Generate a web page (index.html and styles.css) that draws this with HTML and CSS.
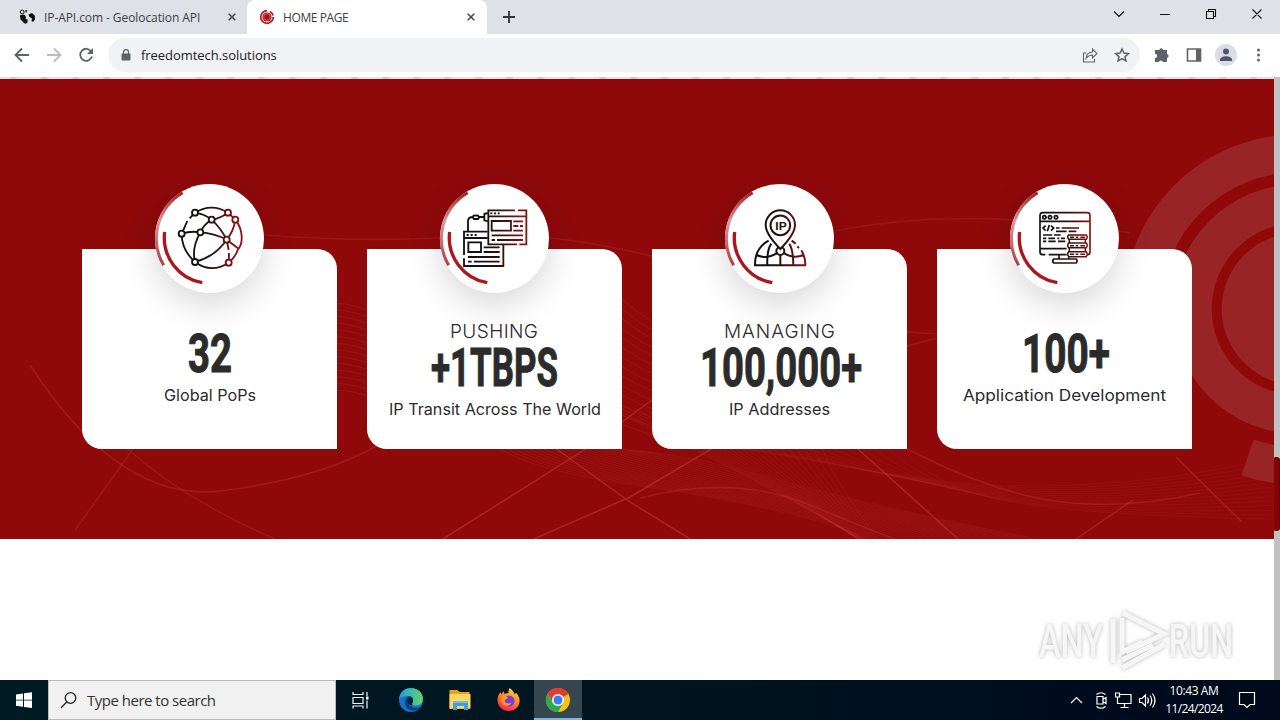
FILE: index.html
```html
<!DOCTYPE html>
<html lang="en">
<head>
<meta charset="utf-8">
<title>HOME PAGE</title>
<link rel="stylesheet" href="styles.css">
</head>
<body>
<div class="screen">
  <header class="tabs">
    <div class="tab tab-idle">
      <svg class="fav" viewBox="0 0 16 16"><circle cx="3.200" cy="3" r="1.900" fill="none" stroke="#111" stroke-width="1"/><path d="M.8 6.500L3.500 5.500 6 6l1 2.500-.5 1.500 2.300.5-.5 3.500-2.500.8L4 13 1.500 10.500zM6 1.500l2.500-.5-1.500 3zM9.500 5.500L13 4l2.800 2.500.2 4-2 2.500-1.500-1 .5-2.500-2.500-1.500z" fill="#111"/></svg>
      <span class="tab-title title-a">IP-API.com - Geolocation API</span>
      <svg class="close" viewBox="0 0 8 8"><path d="M.7.7l6.600 6.600M7.300.7L.7 7.300"/></svg>
    </div>
    <div class="tab tab-active">
      <svg class="fav" viewBox="0 0 16 16"><circle cx="8" cy="8" r="6.300" fill="none" stroke="#b3171b" stroke-width="1.700" stroke-dasharray="29 3 5 3"/><circle cx="8" cy="8" r="4.600" fill="#a80e12"/><circle cx="8" cy="8" r="3.300" fill="none" stroke="#e88" stroke-width=".7"/></svg>
      <span class="tab-title title-b">HOME PAGE</span>
      <svg class="close" viewBox="0 0 8 8"><path d="M.7.7l6.600 6.600M7.300.7L.7 7.300"/></svg>
    </div>
    <svg class="plus" viewBox="0 0 12 12"><path d="M6 0v12M0 6h12"/></svg>
    <svg class="winctl" viewBox="0 0 170 34"><path d="M4 11.500l5 5 5-5M50 14.500h10M96.500 11.500h7v7h-7zM98.500 11.500v-2h7v7h-2M142.500 9.500l9 9M151.500 9.500l-9 9"/></svg>
  </header>

  <div class="toolbar">
    <svg class="nav" viewBox="0 0 108 42"><g fill="none" stroke="#5f6368" stroke-width="1.800"><path d="M29 21H16M22 14.500L15.500 21l6.500 6.500"/><path d="M47 21h13M54 14.500l6.500 6.500-6.500 6.500" stroke="#babcbe"/><path d="M91.300 17.500a6 6 0 1 0 .7 5"/></g><path d="M93 14v6h-6z" fill="#5f6368"/></svg>
    <div class="omnibox">
      <svg class="lock" viewBox="0 0 10 12"><rect x=".5" y="4.500" width="9" height="7" rx="1" fill="#5f6368"/><path d="M2.500 5V3.200a2.500 2.500 0 0 1 5 0V5" fill="none" stroke="#5f6368" stroke-width="1.300"/></svg>
      <span class="url">freedomtech.solutions</span>
      <svg class="omni-actions" viewBox="0 0 48 18"><path d="M4.500 7H1.500v9h11v-3M4 12.500c.5-4 3-6.500 6.500-6.500V3l4.500 4.500-4.500 4.500V9C8 9 6 10 4 12.500z" fill="none" stroke="#5f6368" stroke-width="1.100"/><path d="M40 3l1.900 4.100 4.500.5-3.400 3 1 4.400-4-2.300-4 2.300 1-4.400-3.400-3 4.500-.5z" fill="none" stroke="#5f6368" stroke-width="1.500"/></svg>
    </div>
    <svg class="extras" viewBox="0 0 140 42"><path d="M16 16h3.200a2.100 2.100 0 0 1 4.100 0h3.700v4a2.100 2.100 0 0 1 0 4.100V28h-4a2.200 2.200 0 0 0-4.200 0H15v-4a2.100 2.100 0 0 0 0-4.200V16z" fill="#5f6368"/><path d="M47.500 15h13v12h-13z" fill="#fff" stroke="#5f6368" stroke-width="1.600"/><path d="M56 15h5v12h-5z" fill="#5f6368"/><circle cx="86" cy="21" r="11" fill="#dadce6"/><circle cx="86" cy="17.500" r="3" fill="#51566c"/><path d="M80 27v-1.500c0-2 3-3.300 6-3.300s6 1.300 6 3.300V27z" fill="#51566c"/><g fill="#5f6368"><circle cx="118.500" cy="16" r="1.500"/><circle cx="118.500" cy="21" r="1.500"/><circle cx="118.500" cy="26" r="1.500"/></g></svg>
  </div>

  <div class="viewport">
    <main class="page">
      <div class="peek"></div>
      <section class="stats">
        <svg class="backdrop" viewBox="0 79 1274 460" aria-hidden="true">
          <g id="mesh" fill="none" stroke="#d8484a" stroke-width=".8"></g>
          <g fill="none" stroke="#c93b3e" stroke-width="1.500">
            <path d="M443 539L581 452 720 350M534 539L630 497 711 449 830 365M540 437L630 502 690 539M800 380L858 449 958 539" opacity=".5"/>
            <path d="M1076 539L1133 500M1176 457L1242 522" opacity=".4"/>
            <path d="M75 530L133 449M128 449Q185 500 275 539" opacity=".28"/>
            <path d="M30 365Q120 503 220 491T380 444M640 498Q735 474 810 505T895 539M900 445C1000 498 1080 520 1200 493" opacity=".33"/>
            <path d="M835 231Q965 205 1130 233M264 235Q355 242 440 238M549 238Q610 243 725 275M907 332L937 334M907 346L937 338" opacity=".25"/>
          </g>
          <g fill="#982426">
            <circle cx="1297.700" cy="309" r="76"/>
            <g fill="none" stroke="#982426">
              <circle cx="1297.700" cy="309" r="105.300" stroke-width="38.700"/>
              <path d="M1142 309A155.700 155.700 0 0 1 1297.700 153.300M1247.500 457.400A156.700 156.700 0 0 0 1297.700 465.700" stroke-width="38"/>
            </g>
          </g>
        </svg>

        <div class="cards">
          <article class="card">
            <div class="disc"></div>
            <svg class="badge" viewBox="0 0 420 420">
              <defs>
                <linearGradient id="ink" gradientUnits="userSpaceOnUse" x1="165" y1="0" x2="290" y2="0"><stop offset="0" stop-color="#111"/><stop offset=".45" stop-color="#2c1010"/><stop offset="1" stop-color="#8b1114"/></linearGradient>
                <linearGradient id="rim" x1="0" y1="0" x2="0" y2="1"><stop offset="0" stop-color="#a02225"/><stop offset=".4" stop-color="#d99a9c"/><stop offset="1" stop-color="#b23b40"/></linearGradient>
                <g id="arcs" fill="none"><path d="M128 68A160 160 0 0 0 71 286" stroke="url(#rim)" stroke-width="9"/><path d="M74 186A137 137 0 0 0 187 338" stroke="#a8191e" stroke-width="10"/></g>
              </defs>
              <use href="#arcs"/>
              <g fill="none" stroke="url(#ink)" stroke-width="5.500">
                <path d="M165 128Q215 98 264 128M165 128Q193 132 215 149Q240 145 264 128M286 149C310 180 310 220 294 238Q286 262 266 278Q214 312 165 276Q125 240 125 191L142 153M149 145L165 128M125 191Q153 182 181 187Q190 164 215 149Q242 174 260 209Q282 182 286 149M181 187Q222 189 260 209L294 235M181 187Q154 235 165 276Q225 260 260 209L266 240M267 249L266 278M264 128L286 149"/>
                <g fill="#fff"><circle cx="165" cy="128" r="9"/><circle cx="264" cy="128" r="9"/><circle cx="286" cy="149" r="9"/><circle cx="215" cy="149" r="9"/><circle cx="125" cy="191" r="9"/><circle cx="181" cy="187" r="9"/><circle cx="260" cy="209" r="9"/><circle cx="165" cy="276" r="9"/><circle cx="266" cy="278" r="9"/></g>
              </g>
            </svg>
            <svg class="figure" viewBox="0 0 255 45"><text x="106" y="42" textLength="44" lengthAdjust="spacingAndGlyphs">32</text></svg>
            <svg class="caption" viewBox="0 0 255 24"><text x="82" y="16" textLength="92" lengthAdjust="spacingAndGlyphs">Global PoPs</text></svg>
          </article>

          <article class="card card-tall">
            <div class="disc"></div>
            <svg class="badge" viewBox="0 0 420 420">
              <use href="#arcs"/>
              <g fill="none" stroke="url(#ink)" stroke-width="5.500">
                <path d="M270 121H190V223H276M283 223H304V121H279M190 139H304M196 130h6M207 130h6M218 130h6M200 153H258V182H200zM265 154H294M265 168h15M285 168h9M265 182H294M200 196H294M200 210h10M216 210H294"/>
                <path d="M188 185H117V255M117 265V288H235V225M117 204H188M125 195h6M137 195h6M149 195h6M130 217H168V246H130zM176 232H224M176 246H224M129 261H224M129 275h11M147 275H224M129 182V154Q129 141 144 141M163 141H178M146 137L143 141 147 147H159L163 141 158 136zM188 129L178 132V151L189 154"/>
              </g>
            </svg>
            <svg class="kicker" viewBox="0 0 255 22"><text x="83" y="16" textLength="88">PUSHING</text></svg>
            <svg class="figure" viewBox="0 0 255 45"><text x="64" y="42" textLength="127" lengthAdjust="spacingAndGlyphs">+1TBPS</text></svg>
            <svg class="caption" viewBox="0 0 255 24"><text x="22" y="16" textLength="212" lengthAdjust="spacingAndGlyphs">IP Transit Across The World</text></svg>
          </article>

          <article class="card card-tall">
            <div class="disc"></div>
            <svg class="badge" viewBox="0 0 420 420">
              <use href="#arcs"/>
              <g fill="none" stroke="url(#ink)" stroke-width="6">
                <path d="M132 286H288M135 286Q134 234 176 212M245 212L257 221M274 241Q287 263 286 286M172 286Q170 241 184 221M250 286Q250 241 238 221M211 255V286M140 255Q170 270 203 248M220 248Q249 268 280 255M262 229l5 5"/>
                <circle cx="211" cy="243" r="12"/>
                <path d="M211 237Q167 192 167 165A44 44 0 0 1 255 165Q255 192 211 237z" fill="#fff"/>
                <circle cx="211" cy="166" r="29.500"/>
              </g>
              <text class="pin-label" x="196" y="179" textLength="34" lengthAdjust="spacingAndGlyphs">IP</text>
            </svg>
            <svg class="kicker" viewBox="0 0 255 22"><text x="72" y="16" textLength="111">MANAGING</text></svg>
            <svg class="figure" viewBox="0 0 255 45"><text x="48" y="42" textLength="162" lengthAdjust="spacingAndGlyphs">100,000+</text></svg>
            <svg class="caption" viewBox="0 0 255 24"><text x="77" y="16" textLength="101" lengthAdjust="spacingAndGlyphs">IP Addresses</text></svg>
          </article>

          <article class="card">
            <div class="disc"></div>
            <svg class="badge" viewBox="0 0 420 420">
              <use href="#arcs"/>
              <g fill="none" stroke="url(#ink)" stroke-width="5">
                <path d="M151 254H143Q135 254 135 246V137Q135 128 143 128H277Q285 128 285 137V246Q285 254 277 254M161 254H215M135 154H285M135 236H215"/>
                <circle cx="148" cy="142" r="5"/><circle cx="165" cy="142" r="5"/><circle cx="183" cy="142" r="5"/>
                <path d="M152 167L144 174 152 182M168 167L176 174 168 182M163 165L157 184M183 174h11M200 174H252M183 184H215M221 184H244M144 195H172M177 195H197M144 205H154M160 205H180M187 205h6M198 205h12M144 214H154M160 214H182M189 214H211"/>
                <path d="M192 255V267M221 262V267M176 267H244Q249 273 244 279H176Q170 273 176 267z"/>
                <path d="M221 195H248M257 195H274Q279 201 274 208H221Q215 201 221 195zM221 219H274Q279 226 274 233H221Q215 226 221 219zM221 245H274Q279 252 274 260H221Q215 252 221 245zM223 208V219M271 208V219M223 233V245M271 233V245M225 202h12M242 202h8M256 202h14M225 227h12M242 227h8M256 227h14M225 253h12M242 253h8M256 253h14" stroke-width="4.500"/>
              </g>
            </svg>
            <svg class="figure" viewBox="0 0 255 45"><text x="85" y="42" textLength="88" lengthAdjust="spacingAndGlyphs">100+</text></svg>
            <svg class="caption" viewBox="0 0 255 24"><text x="26" y="16" textLength="203" lengthAdjust="spacingAndGlyphs">Application Development</text></svg>
          </article>
        </div>
      </section>
      <section class="blank">
        <svg class="watermark" viewBox="0 0 208 72">
          <g class="wm-text"><text x="8" y="51" textLength="64" lengthAdjust="spacingAndGlyphs">ANY</text><text x="138" y="51" textLength="64" lengthAdjust="spacingAndGlyphs">RUN</text></g>
          <g class="wm-mark"><path d="M92 7L133 28 95 46M91 12V46L112 36M82 13V57M91 62L134 38M91 54L122 39"/></g>
        </svg>
      </section>
    </main>
    <div class="scrollbar"><div class="thumb"></div></div>
  </div>

  <footer class="taskbar">
    <svg class="start" viewBox="0 0 48 40"><path d="M16 14.500l7-1v6.200h-7zM24 13.300l8-1.100v7.500h-8zM16 20.500h7v6.300l-7-1zM24 20.500h8V28l-8-1.100z" fill="#fff"/></svg>
    <div class="search">
      <svg class="glass" viewBox="0 0 18 18"><circle cx="10.500" cy="7" r="5.300"/><path d="M6.800 11L1 16.800"/></svg>
      <span>Type here to search</span>
    </div>
    <div class="task"><svg viewBox="0 0 48 40"><path d="M17 12v2.500h10V12M17 17.500h10v6H17zM17 28.500V26h10v2.500M31 12v4M31 20.500v8" fill="none" stroke="#eef3f5" stroke-width="1.200"/><path d="M30 16.500h2.500v3H30z" fill="#fff"/></svg></div>
    <div class="task"><svg viewBox="0 0 48 40">
      <defs><linearGradient id="ea" x1="0" y1="0" x2="1" y2="0"><stop offset="0" stop-color="#259fdc"/><stop offset="1" stop-color="#5fd46c"/></linearGradient></defs>
      <circle cx="27" cy="20" r="12" fill="#1372c4"/><path d="M15 19C16 11 22 8 27 8c7 0 12 5 12 11 0 4-3 6.500-7 6.500-3 0-4.500-1.200-3.500-3 2-4-1-6.500-4.500-6.500-4 0-8 1-9 3z" fill="url(#ea)"/><path d="M23.500 17c-4 3-4 10 2.500 13 4 1.500 8 0 10.500-3-6 2.500-12 0-12-5 0-2 .8-3.500 2-4.500z" fill="#0b3f82"/><path d="M28.500 22.500c1.500-3 0-6-3-6.300-2 .8-2.500 3-2.300 5 .3 2.300 2 4 4.800 4.300z" fill="#06253b"/></svg></div>
    <div class="task task-gap"><svg viewBox="0 0 48 40"><path d="M16.500 10h8l2 2h10v17h-20z" fill="#e9a01b"/><path d="M16.500 14h21v14.500h-21z" fill="#ffd75e"/><path d="M20 21h15v9h-4v-4h-7v4h-4z" fill="#3f9fdf"/><path d="M20 21h15v2H20z" fill="#71bce9"/></svg></div>
    <div class="task task-gap"><svg viewBox="0 0 48 40">
      <defs><linearGradient id="ff" x1=".8" y1="0" x2=".3" y2="1"><stop offset="0" stop-color="#ffe13b"/><stop offset=".45" stop-color="#ff8b22"/><stop offset="1" stop-color="#f6234f"/></linearGradient></defs>
      <path d="M27.500 8c3 2 4.500 4 4.800 6l2-1c2.500 3 3.700 5.500 3.200 9-.8 5.500-5 9-11 9-6.500 0-11-5-11-11 0-3 1-6 3-8l1 2.500 2-3.500 1 3c1.500-.8 3-.8 4-.8 0-2 0-3.500 1-5.200z" fill="url(#ff)"/><circle cx="27" cy="21" r="5.500" fill="#7b3bd6"/><path d="M19 16c3-1 5 0 7 1.500-1 2-3 1.500-3.500 3 .5 3 4 4 7 2-1 4-8 4.500-10 0z" fill="#ff9a25"/></svg></div>
    <div class="task task-active"><svg viewBox="0 0 48 40"><circle cx="24" cy="20" r="12" fill="#fbc116"/><path d="M24 20L13.600 14a12 12 0 0 1 20.800 0z" fill="#e33b2e"/><path d="M24 14h10.400a12 12 0 0 0-20.800 0L19 23z" fill="#e33b2e"/><path d="M13.600 14a12 12 0 0 0 10.400 18l5.200-9H18.800z" fill="#2da94f"/><circle cx="24" cy="20" r="6" fill="#fff"/><circle cx="24" cy="20" r="4.500" fill="#3b7ded"/></svg></div>
    <div class="tray">
      <svg class="tray-icons" viewBox="0 0 96 40"><g fill="none" stroke="#fff" stroke-width="1.200"><path d="M5 23l5.500-5.500L16 23M31 16.500h6v7.500h-6zM37.500 19l2.500-1.500v6L37.500 22M30.500 14.500q4.500-3.500 9 0M30.500 26.500q4.500 3.500 9 0M53 14.500h12v9H51.500V19M58.500 24v3.500M54.500 27.500h8M49.500 13h4v4h-4zM51.500 17v3"/><path d="M73.500 18.500H76l3.500-3.500v11L76 22.500h-2.500zM81.500 17.500q2 3 0 6M84 15.500q3.500 5 0 10M86.500 13.500q5 7 0 14"/></g></svg>
      <div class="clock"><span class="time">10:43 AM</span><span class="date">11/24/2024</span></div>
      <svg class="notes" viewBox="0 0 18 18"><path d="M1.500 1.500h15v12H12l-3 3-3-3H1.500z" fill="none" stroke="#fff" stroke-width="1.200"/></svg>
    </div>
  </footer>
</div>
<script src="mesh.js"></script>
</body>
</html>
```

FILE: styles.css
```css
* { box-sizing: border-box; }
body { margin: 0; font-family: "Open Sans", "Noto Sans", sans-serif; }
svg { display: block; flex: none; }
.screen { width: 1280px; height: 720px; display: flex; flex-direction: column; overflow: hidden; background: #fff; }

.tabs { height: 34px; flex: none; display: flex; align-items: center; background: #dee1e8; }
.tab { height: 34px; display: flex; align-items: center; font-size: 12px; color: #3c4043; white-space: nowrap; }
.tab-idle { width: 247px; padding: 0 11px 0 19px; }
.tab-active { width: 240px; padding: 0 12px; background: #fff; border-radius: 8px 8px 0 0; }
.fav { width: 16px; height: 16px; }
.tab-title { flex: 1; margin-left: 8px; }
.title-a { margin-left: 9px; letter-spacing: -0.08px; }
.title-b { letter-spacing: -0.4px; }
.close { width: 8px; height: 8px; fill: none; stroke: #45494d; stroke-width: 1.6; }
.plus { width: 12px; height: 12px; margin-left: 16px; fill: none; stroke: #30343a; stroke-width: 1.8; }
.winctl { width: 170px; height: 34px; margin-left: auto; fill: none; stroke: #111; stroke-width: 1.1; }

.toolbar { height: 43px; flex: none; display: flex; align-items: flex-start; background: #fff; }
.nav { width: 108px; height: 42px; }
.omnibox { width: 1032px; height: 34px; margin-top: 4px; padding: 0 9px 0 13px; display: flex; align-items: center; border-radius: 17px; background: #f0f2f5; }
.lock { width: 10px; height: 12px; }
.url { flex: 1; margin-left: 10px; font-size: 13px; line-height: 18px; letter-spacing: -0.05px; color: #202124; }
.omni-actions { width: 48px; height: 18px; margin-right: 1px; }
.extras { width: 140px; height: 42px; }

.viewport { height: 603px; flex: none; display: flex; }
.page { width: 1274px; }
.peek { height: 2px; background: repeating-linear-gradient(90deg, #f3dfe0 0 9px, #e2c0c2 12px 15px, #f3dfe0 19px 31px); }
.stats { position: relative; height: 460px; padding: 170px 0 0 82px; background: #8f090b; }
.backdrop { position: absolute; inset: 0; width: 1274px; height: 460px; }
.cards { position: relative; display: flex; gap: 30px; }
.card { position: relative; width: 255px; height: 200px; padding-top: 81px; background: #fff; border-radius: 0 20px 0 20px; }
.card-tall { padding-top: 73px; }
.disc { position: absolute; left: 73px; top: -65px; width: 109px; height: 109px; border-radius: 50%; background: #fff; box-shadow: 0 11px 34px rgba(0, 0, 0, 0.16); }
.badge { position: absolute; left: 58px; top: -79px; width: 140px; height: 140px; }
.pin-label { font: 700 34px "Liberation Sans", sans-serif; fill: #241010; }
.kicker, .figure, .caption { width: 255px; overflow: visible; fill: #2b2b2b; }
.kicker { height: 22px; font: 300 19px Inter, sans-serif; }
.figure { height: 45px; font: 700 54px Roboto, sans-serif; stroke: #2b2b2b; stroke-width: 1; }
.caption { height: 24px; margin-top: 10px; font: 400 16px Inter, sans-serif; }
.blank { height: 141px; padding: 67px 35px 0 0; display: flex; justify-content: flex-end; background: #fff; }
.watermark { width: 208px; height: 72px; overflow: visible; filter: drop-shadow(0 0 2px rgba(0, 0, 0, 0.28)); }
.wm-text { font: 500 47px Roboto, sans-serif; fill: #f6f6f6; }
.wm-mark { fill: none; stroke: #f6f6f6; stroke-width: 5; }
.scrollbar { width: 6px; padding-top: 380px; background: #c1c1c1; }
.thumb { width: 7px; height: 74px; margin-left: -1px; border: 1px solid #590000; border-radius: 3px; background: #850306; }

.taskbar { height: 40px; flex: none; display: flex; background: linear-gradient(90deg, #001a24, #00151f 50%, #000a1d 90%); }
.start { width: 48px; height: 40px; }
.search { width: 288px; height: 40px; padding-left: 11px; display: flex; align-items: center; background: #f1f1f1; border: 1px solid #b9bcbe; font-size: 15px; letter-spacing: -0.5px; color: #333; }
.glass { width: 18px; height: 18px; margin-right: 9px; fill: none; stroke: #222; stroke-width: 1.3; }
.task { width: 48px; height: 40px; }
.task-gap { margin-left: 1px; }
.task svg { width: 48px; height: 40px; }
.task-active { margin-left: 4px; background: #36464e; box-shadow: inset 0 -2px #76b9ed; }
.tray { margin-left: auto; display: flex; align-items: center; padding-right: 24px; color: #fff; }
.tray-icons { width: 96px; height: 40px; margin-right: 1px; }
.clock { width: 60px; margin: 0 14px 0 1px; display: flex; flex-direction: column; align-items: center; font-size: 12px; line-height: 18px; white-space: nowrap; }
.time { letter-spacing: -0.4px; }
.date { letter-spacing: -0.6px; }
.notes { width: 18px; height: 18px; }
```

FILE: mesh.js
```js
// Fine wave strands drawn behind the stat cards.
const mesh = document.getElementById("mesh");
const strand = (d, opacity) => {
  const p = document.createElementNS("http://www.w3.org/2000/svg", "path");
  p.setAttribute("d", d);
  p.setAttribute("opacity", opacity);
  mesh.appendChild(p);
};
for (let i = 0; i < 22; i++) {
  strand(`M${470 + i * 8} ${430 + i}C${560 + i * 8} ${500 - i * 2} ${680 + i * 5} ${470 + i} ${880 + i * 8} 541`, 0.17);
  strand(`M${590 + i * 11} ${400 + i * 2}Q${700 + i * 6} ${450 + i} ${800 + i * 4} ${505 + i * 2}T${900 + i * 4} 545`, 0.17);
}
for (let i = 0; i < 14; i++) {
  strand(`M${720 + i * 14} 448C${850 + i * 8} ${455 + i * 4} ${980 + i * 4} ${525 - i} 1290 ${455 + i * 5}`, 0.12);
  strand(`M270 ${330 + i * 7}C330 ${275 + i * 7} 380 ${315 + i * 6} 440 ${350 + i * 7}`, 0.22);
  strand(`M600 ${275 + i * 11}Q640 ${325 + i * 8} 680 ${330 + i * 9}`, 0.2);
}
```
